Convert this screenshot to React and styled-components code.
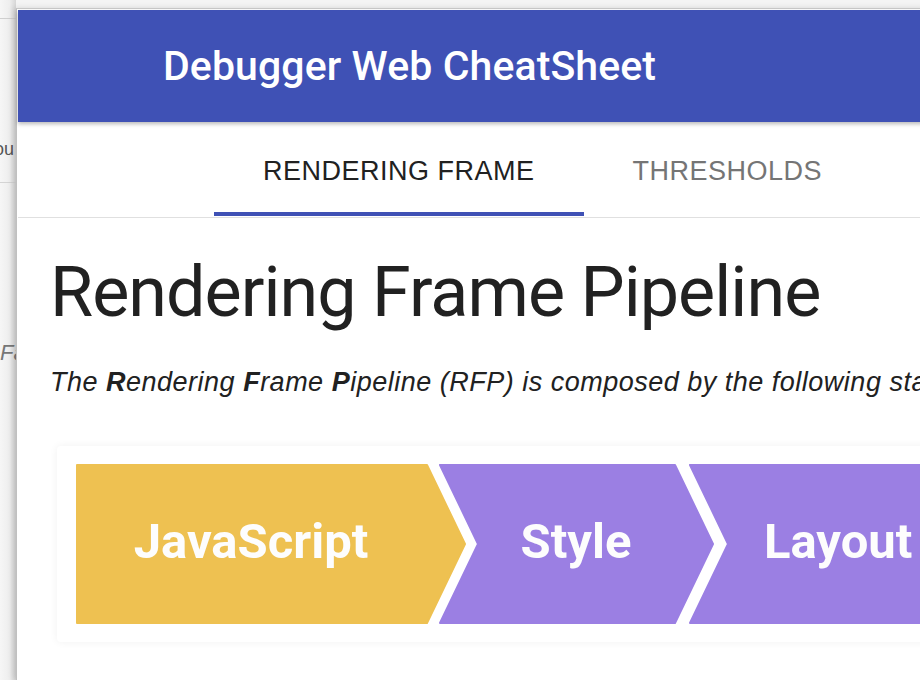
import React from "react";
import styled, { createGlobalStyle } from "styled-components";

const GlobalStyle = createGlobalStyle`
  html, body {
    margin: 0;
    padding: 0;
    background: #f4f4f4;
    overflow: hidden;
  }
`;

const stages = [
  { label: "JavaScript", color: "#eec151", points: "20,19 370,19 408,98 370,177 20,177", x: 194, anchor: "middle" },
  { label: "Style", color: "#9b7fe3", points: "383,19 618,19 656,98 618,177 383,177 421,98", x: 519, anchor: "middle" },
  { label: "Layout", color: "#9b7fe3", points: "633,19 900,19 938,98 900,177 633,177 671,98", x: 707, anchor: "start" },
];

const tabs = [
  { label: "RENDERING FRAME", active: true },
  { label: "THRESHOLDS", active: false },
];

export default function App() {
  return (
    <>
      <GlobalStyle />
      <Desktop>
        <BehindPage>
          <BehindBar />
          <BehindRow>You</BehindRow>
          <BehindNote>Fast</BehindNote>
        </BehindPage>

        <Popup>
          <Header>
            <Title>Debugger Web CheatSheet</Title>
          </Header>

          <TabBar>
            {tabs.map((tab) => (
              <Tab key={tab.label} $active={tab.active}>
                {tab.label}
              </Tab>
            ))}
          </TabBar>

          <Content>
            <Heading>Rendering Frame Pipeline</Heading>
            <Lead>
              The <b>R</b>endering <b>F</b>rame <b>P</b>ipeline (RFP) is composed by the
              following stages:
            </Lead>

            <Figure>
              <svg width="1000" height="196" viewBox="0 0 1000 196">
                {stages.map((s) => (
                  <g key={s.label}>
                    <polygon
                      points={s.points}
                      fill={s.color}
                      stroke={s.color}
                      strokeWidth="2"
                      strokeLinejoin="round"
                    />
                    <text
                      x={s.x}
                      y="112"
                      textAnchor={s.anchor}
                      fill="#fdfdfd"
                      fontFamily="Roboto, sans-serif"
                      fontWeight="700"
                      fontSize="49"
                    >
                      {s.label}
                    </text>
                  </g>
                ))}
              </svg>
            </Figure>
          </Content>
        </Popup>
      </Desktop>
    </>
  );
}

const Desktop = styled.div`
  display: flex;
  height: 680px;
  overflow: hidden;
`;

const BehindPage = styled.div`
  width: 16px;
  flex-shrink: 0;
  overflow: hidden;
  background: linear-gradient(to right, #f6f6f6 0%, #eeeeee 60%, #d6d6d6 100%);
  font-family: "Liberation Sans", Arial, sans-serif;
  color: #555;
`;

const BehindBar = styled.div`
  height: 18px;
  border-bottom: 1px solid #cfcfcf;
`;

const BehindRow = styled.div`
  height: 164px;
  border-bottom: 1px solid #d4d4d4;
  display: flex;
  justify-content: flex-end;
  align-items: flex-end;
  padding: 0 2px 22px 0;
  font-size: 18px;
  white-space: nowrap;
  box-sizing: border-box;
`;

const BehindNote = styled.div`
  margin-top: 157px;
  font-size: 22px;
  font-style: italic;
  color: #777;
  white-space: nowrap;
`;

const Popup = styled.div`
  width: 1100px;
  flex-shrink: 0;
  margin-top: 8px;
  background: #fff;
  border-top: 1px solid #c9c9c9;
  border-left: 1px solid #c0c0c0;
  padding: 1px 0 0 1px;
  box-shadow: -3px 0 6px rgba(0, 0, 0, 0.12);
`;

const Header = styled.header`
  height: 112px;
  background: #3f51b5;
  display: flex;
  align-items: center;
  padding-left: 145px;
  box-shadow: 0 2px 4px rgba(0, 0, 0, 0.28);
  position: relative;
  z-index: 1;
`;

const Title = styled.h1`
  margin: 0;
  color: #fff;
  font-family: Roboto, sans-serif;
  font-weight: 500;
  font-size: 41px;
  letter-spacing: 0.1px;
`;

const TabBar = styled.nav`
  display: flex;
  height: 96px;
  padding-left: 196px;
  border-bottom: 1px solid #e0e0e0;
  box-sizing: border-box;
`;

const Tab = styled.div`
  display: flex;
  align-items: center;
  justify-content: center;
  padding: 8px 49px 0;
  font-family: "Liberation Sans", Arial, sans-serif;
  font-size: 27px;
  letter-spacing: 0.5px;
  color: ${(p) => (p.$active ? "#212121" : "#757575")};
  border-bottom: 4px solid ${(p) => (p.$active ? "#3f51b5" : "transparent")};
  margin-bottom: 1px;
`;

const Content = styled.main`
  padding: 32px 0 0 32px;
`;

const Heading = styled.h2`
  margin: 0;
  font-family: Roboto, sans-serif;
  font-weight: 400;
  font-size: 70px;
  line-height: 84px;
  letter-spacing: -0.95px;
  color: #212121;
`;

const Lead = styled.p`
  margin: 31px 0 0;
  font-family: "Liberation Sans", Arial, sans-serif;
  font-style: italic;
  font-size: 27px;
  line-height: 35px;
  letter-spacing: 0.5px;
  color: #212121;
  white-space: nowrap;
`;

const Figure = styled.figure`
  margin: 46px 0 0 7px;
  width: 1000px;
  height: 196px;
  border-radius: 4px;
  box-shadow: 0 0 8px rgba(0, 0, 0, 0.06);

  svg {
    display: block;
  }
`;
